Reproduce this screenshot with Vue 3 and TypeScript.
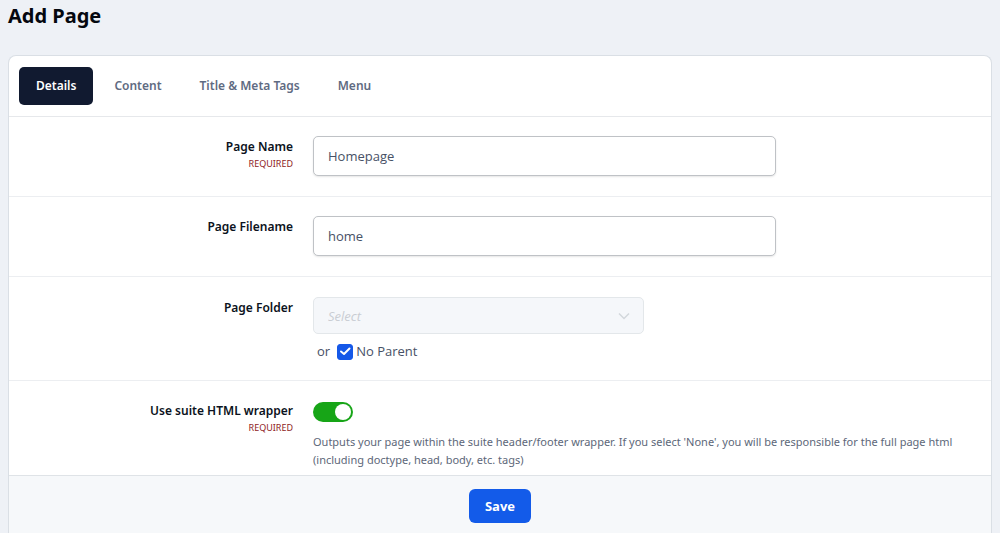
<script setup lang="ts">
import { ref } from 'vue'

const tabs: string[] = ['Details', 'Content', 'Title & Meta Tags', 'Menu']
const activeTab = ref('Details')
const pageName = ref('Homepage')
const pageFilename = ref('home')
const folder = ref('')
const noParent = ref(true)
const useWrapper = ref(true)
</script>

<template>
  <main class="page">
    <h1 class="heading">Add Page</h1>
    <form class="card" @submit.prevent>
      <nav class="tabs">
        <button
          v-for="tab in tabs"
          :key="tab"
          type="button"
          class="tab"
          :class="{ active: tab === activeTab }"
          @click="activeTab = tab"
        >
          {{ tab }}
        </button>
      </nav>

      <div class="row">
        <div class="caption">
          <label for="page-name">Page Name</label>
          <span class="required">REQUIRED</span>
        </div>
        <div class="field">
          <input id="page-name" v-model="pageName" class="text" type="text" required />
        </div>
      </div>

      <div class="row">
        <div class="caption">
          <label for="page-filename">Page Filename</label>
        </div>
        <div class="field">
          <input id="page-filename" v-model="pageFilename" class="text" type="text" />
        </div>
      </div>

      <div class="row folder">
        <div class="caption">
          <label for="page-folder">Page Folder</label>
        </div>
        <div class="field">
          <div class="picker">
            <select id="page-folder" v-model="folder" class="select" :disabled="noParent">
              <option value="">Select</option>
            </select>
            <svg class="chevron" viewBox="0 0 12 8" aria-hidden="true">
              <path d="M1 1.5 6 6.5 11 1.5" />
            </svg>
          </div>
          <div class="alternative">
            <span>or</span>
            <label class="check">
              <span class="box">
                <input v-model="noParent" type="checkbox" />
                <svg v-if="noParent" viewBox="0 0 16 16" aria-hidden="true">
                  <path d="M4 7.5 7 10 12.5 4.5" />
                </svg>
              </span>
              No Parent
            </label>
          </div>
        </div>
      </div>

      <div class="row last">
        <div class="caption">
          <label for="use-wrapper">Use suite HTML wrapper</label>
          <span class="required">REQUIRED</span>
        </div>
        <div class="field">
          <input id="use-wrapper" v-model="useWrapper" class="switch" type="checkbox" role="switch" />
          <p class="help">
            Outputs your page within the suite header/footer wrapper. If you select 'None', you will
            be responsible for the full page html (including doctype, head, body, etc. tags)
          </p>
        </div>
      </div>

      <footer class="footer">
        <button type="submit" class="save">Save</button>
      </footer>
    </form>
  </main>
</template>

<style>
body {
  margin: 0;
  background: #eef1f6;
}
</style>

<style scoped>
.page,
.page * {
  box-sizing: border-box;
}

.page {
  display: flex;
  flex-direction: column;
  min-height: 100vh;
  padding: 4px 8px 0;
  font-family: 'Open Sans', 'Noto Sans', sans-serif;
  font-size: 13px;
  line-height: 18px;
  color: #475166;
}

.heading {
  margin: 0 0 27px;
  font-family: 'Noto Sans', 'Open Sans', sans-serif;
  font-size: 20px;
  line-height: 24px;
  font-weight: 700;
  color: #05080f;
}

.card {
  display: flex;
  flex: 1;
  flex-direction: column;
  border: 1px solid #dadfe5;
  border-bottom: 0;
  border-radius: 8px 8px 0 0;
  background: #fff;
}

.tabs {
  display: flex;
  gap: 4px;
  padding: 11px 10px;
  border-bottom: 1px solid #e6e8eb;
}

.tab {
  height: 38px;
  padding: 0 17px;
  border: 0;
  border-radius: 5px;
  background: transparent;
  color: #5f6b82;
  font: inherit;
  font-family: 'Noto Sans', 'Open Sans', sans-serif;
  font-size: 12px;
  font-weight: 600;
}

.tab.active {
  background: #111a30;
  color: #fff;
}

.row {
  display: grid;
  grid-template-columns: 264px minmax(0, 1fr);
  gap: 20px;
  padding: 19px 20px 20px;
  border-bottom: 1px solid #eceef1;
}

.row.folder {
  padding-top: 20px;
}

.row.last {
  padding-top: 21px;
  padding-bottom: 6px;
  border-bottom: 0;
}

.caption {
  display: flex;
  flex-direction: column;
  align-items: flex-end;
  padding-top: 2px;
  font-family: 'Noto Sans', 'Open Sans', sans-serif;
  font-size: 12px;
  font-weight: 600;
  color: #0b1220;
}

.last .caption {
  padding-top: 0;
}

.required {
  font-size: 9px;
  line-height: 16px;
  font-weight: 400;
  color: #8f1d1d;
}

.text {
  display: block;
  width: 100%;
  max-width: 463px;
  height: 40px;
  padding: 0 14px;
  border: 1px solid #bfc2c6;
  border-radius: 5px;
  background: #fff;
  box-shadow: 0 1px 2px rgba(0, 0, 0, 0.1);
  color: #475166;
  font: inherit;
}

.picker {
  position: relative;
  max-width: 331px;
}

.select {
  display: block;
  width: 100%;
  height: 37px;
  padding: 0 14px;
  border: 1px solid #e3e7ea;
  border-radius: 5px;
  appearance: none;
  background: #f5f7fa;
  color: #c9cdd3;
  font: inherit;
  font-style: italic;
  opacity: 1;
}

.chevron {
  position: absolute;
  top: 15px;
  right: 14px;
  width: 12px;
  height: 8px;
  fill: none;
  stroke: #d3d7dc;
  stroke-width: 1.5;
}

.alternative {
  display: flex;
  gap: 7px;
  padding: 8px 0 0 4px;
}

.check {
  display: flex;
  gap: 3px;
}

.box {
  position: relative;
  width: 16px;
  height: 16px;
  margin-top: 2px;
}

.box input {
  display: block;
  width: 16px;
  height: 16px;
  margin: 0;
  border: 1px solid #bfc2c6;
  border-radius: 3px;
  appearance: none;
  background: #fff;
}

.box input:checked {
  border-color: #1558e8;
  background: #1558e8;
}

.box svg {
  position: absolute;
  inset: 0;
  fill: none;
  stroke: #fff;
  stroke-width: 2;
  stroke-linecap: round;
  stroke-linejoin: round;
  pointer-events: none;
}

.switch {
  display: flex;
  align-items: center;
  width: 40px;
  height: 20px;
  margin: 0;
  padding: 2px;
  border-radius: 10px;
  appearance: none;
  background: #c4c9d0;
}

.switch::before {
  width: 16px;
  height: 16px;
  border-radius: 50%;
  background: #fff;
  content: '';
}

.switch:checked {
  justify-content: flex-end;
  background: #17a517;
}

.help {
  margin: 11px 0 0;
  font-family: 'Noto Sans', 'Open Sans', sans-serif;
  font-size: 11px;
  color: #5d6779;
}

.footer {
  display: flex;
  flex: 1;
  align-items: flex-start;
  justify-content: center;
  padding: 13px 20px 10px;
  border-top: 1px solid #dfe3e7;
  background: #f6f8fa;
}

.save {
  height: 34px;
  padding: 0 16px;
  border: 0;
  border-radius: 6px;
  background: #135be9;
  color: #fff;
  font: inherit;
  font-weight: 700;
}
</style>
